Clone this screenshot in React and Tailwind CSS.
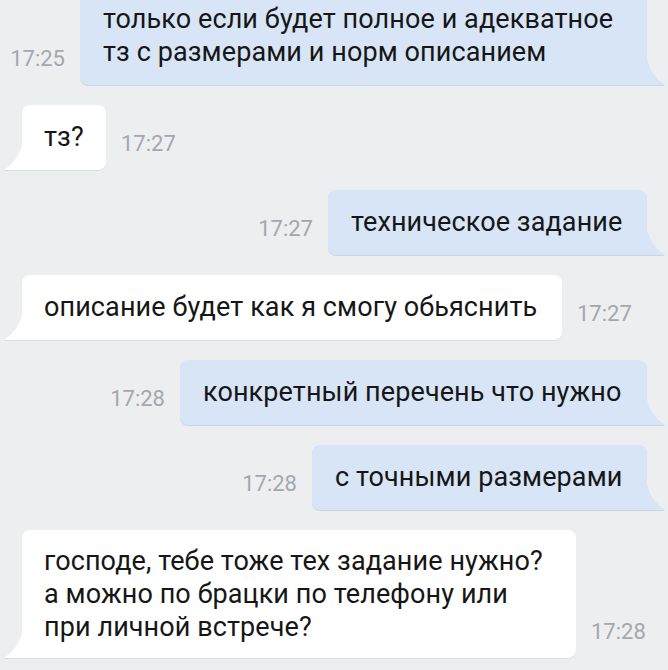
const font = { fontFamily: "Roboto, 'Noto Sans', sans-serif" };

const Tail = ({ side, fill, edge }) =>
  side === "right" ? (
    <svg
      className="absolute bottom-[-1px] left-full"
      width="19"
      height="26"
      viewBox="0 0 19 26"
    >
      <path d="M0 1 Q4 17 18 26 L0 26 Z" fill={edge} />
      <path d="M0 0 Q4 16 18 25 L0 25 Z" fill={fill} />
    </svg>
  ) : (
    <svg
      className="absolute bottom-[-1px] right-full"
      width="19"
      height="26"
      viewBox="0 0 19 26"
    >
      <path d="M19 1 Q15 17 1 26 L19 26 Z" fill={edge} />
      <path d="M19 0 Q15 16 1 25 L19 25 Z" fill={fill} />
    </svg>
  );

const Time = ({ children, className }) => (
  <span className={`mb-[15px] shrink-0 text-[22px] leading-[22px] text-[#a3a8ae] ${className}`}>
    {children}
  </span>
);

const Outgoing = ({ time, width, children }) => (
  <div className="flex items-end justify-end pr-[21px]">
    <Time className="mr-[15px]">{time}</Time>
    <div
      className={`relative rounded-lg rounded-br-none bg-[#d7e5f6] px-[23px] py-[16px] shadow-[0_1px_0_#c6d5e7] ${width}`}
    >
      <p className="whitespace-nowrap text-[27px] leading-[33px] tracking-[0.1px] text-[#161616]">
        {children}
      </p>
      <Tail side="right" fill="#d7e5f6" edge="#c6d5e7" />
    </div>
  </div>
);

const Incoming = ({ time, width, pad = "py-[16px]", children }) => (
  <div className="flex items-end pl-[22px]">
    <div
      className={`relative rounded-lg rounded-bl-none bg-white px-[22px] shadow-[0_1px_0_#d9dce0] ${pad} ${width}`}
    >
      <p className="whitespace-nowrap text-[27px] leading-[33px] tracking-[0.1px] text-[#161616]">
        {children}
      </p>
      <Tail side="left" fill="#ffffff" edge="#d9dce0" />
    </div>
    <Time className="ml-[15px]">{time}</Time>
  </div>
);

export default function App() {
  return (
    <div
      className="h-[670px] w-[668px] overflow-hidden bg-[#edeef0]"
      style={font}
    >
      <div className="-mt-[13px] flex flex-col gap-5">
        <Outgoing time="17:25" width="w-[567px]">
          только если будет полное и адекватное
          <br />
          тз с размерами и норм описанием
        </Outgoing>
        <Incoming time="17:27" width="w-[84px]">
          тз?
        </Incoming>
        <Outgoing time="17:27" width="w-[319px]">
          техническое задание
        </Outgoing>
        <Incoming time="17:27" width="w-[540px]">
          описание будет как я смогу обьяснить
        </Incoming>
        <Outgoing time="17:28" width="w-[467px]">
          конкретный перечень что нужно
        </Outgoing>
        <Outgoing time="17:28" width="w-[335px]">
          с точными размерами
        </Outgoing>
        <Incoming time="17:28" width="w-[554px]" pad="pt-[15px] pb-[14px]">
          господе, тебе тоже тех задание нужно?
          <br />
          а можно по брацки по телефону или
          <br />
          при личной встрече?
        </Incoming>
      </div>
    </div>
  );
}
